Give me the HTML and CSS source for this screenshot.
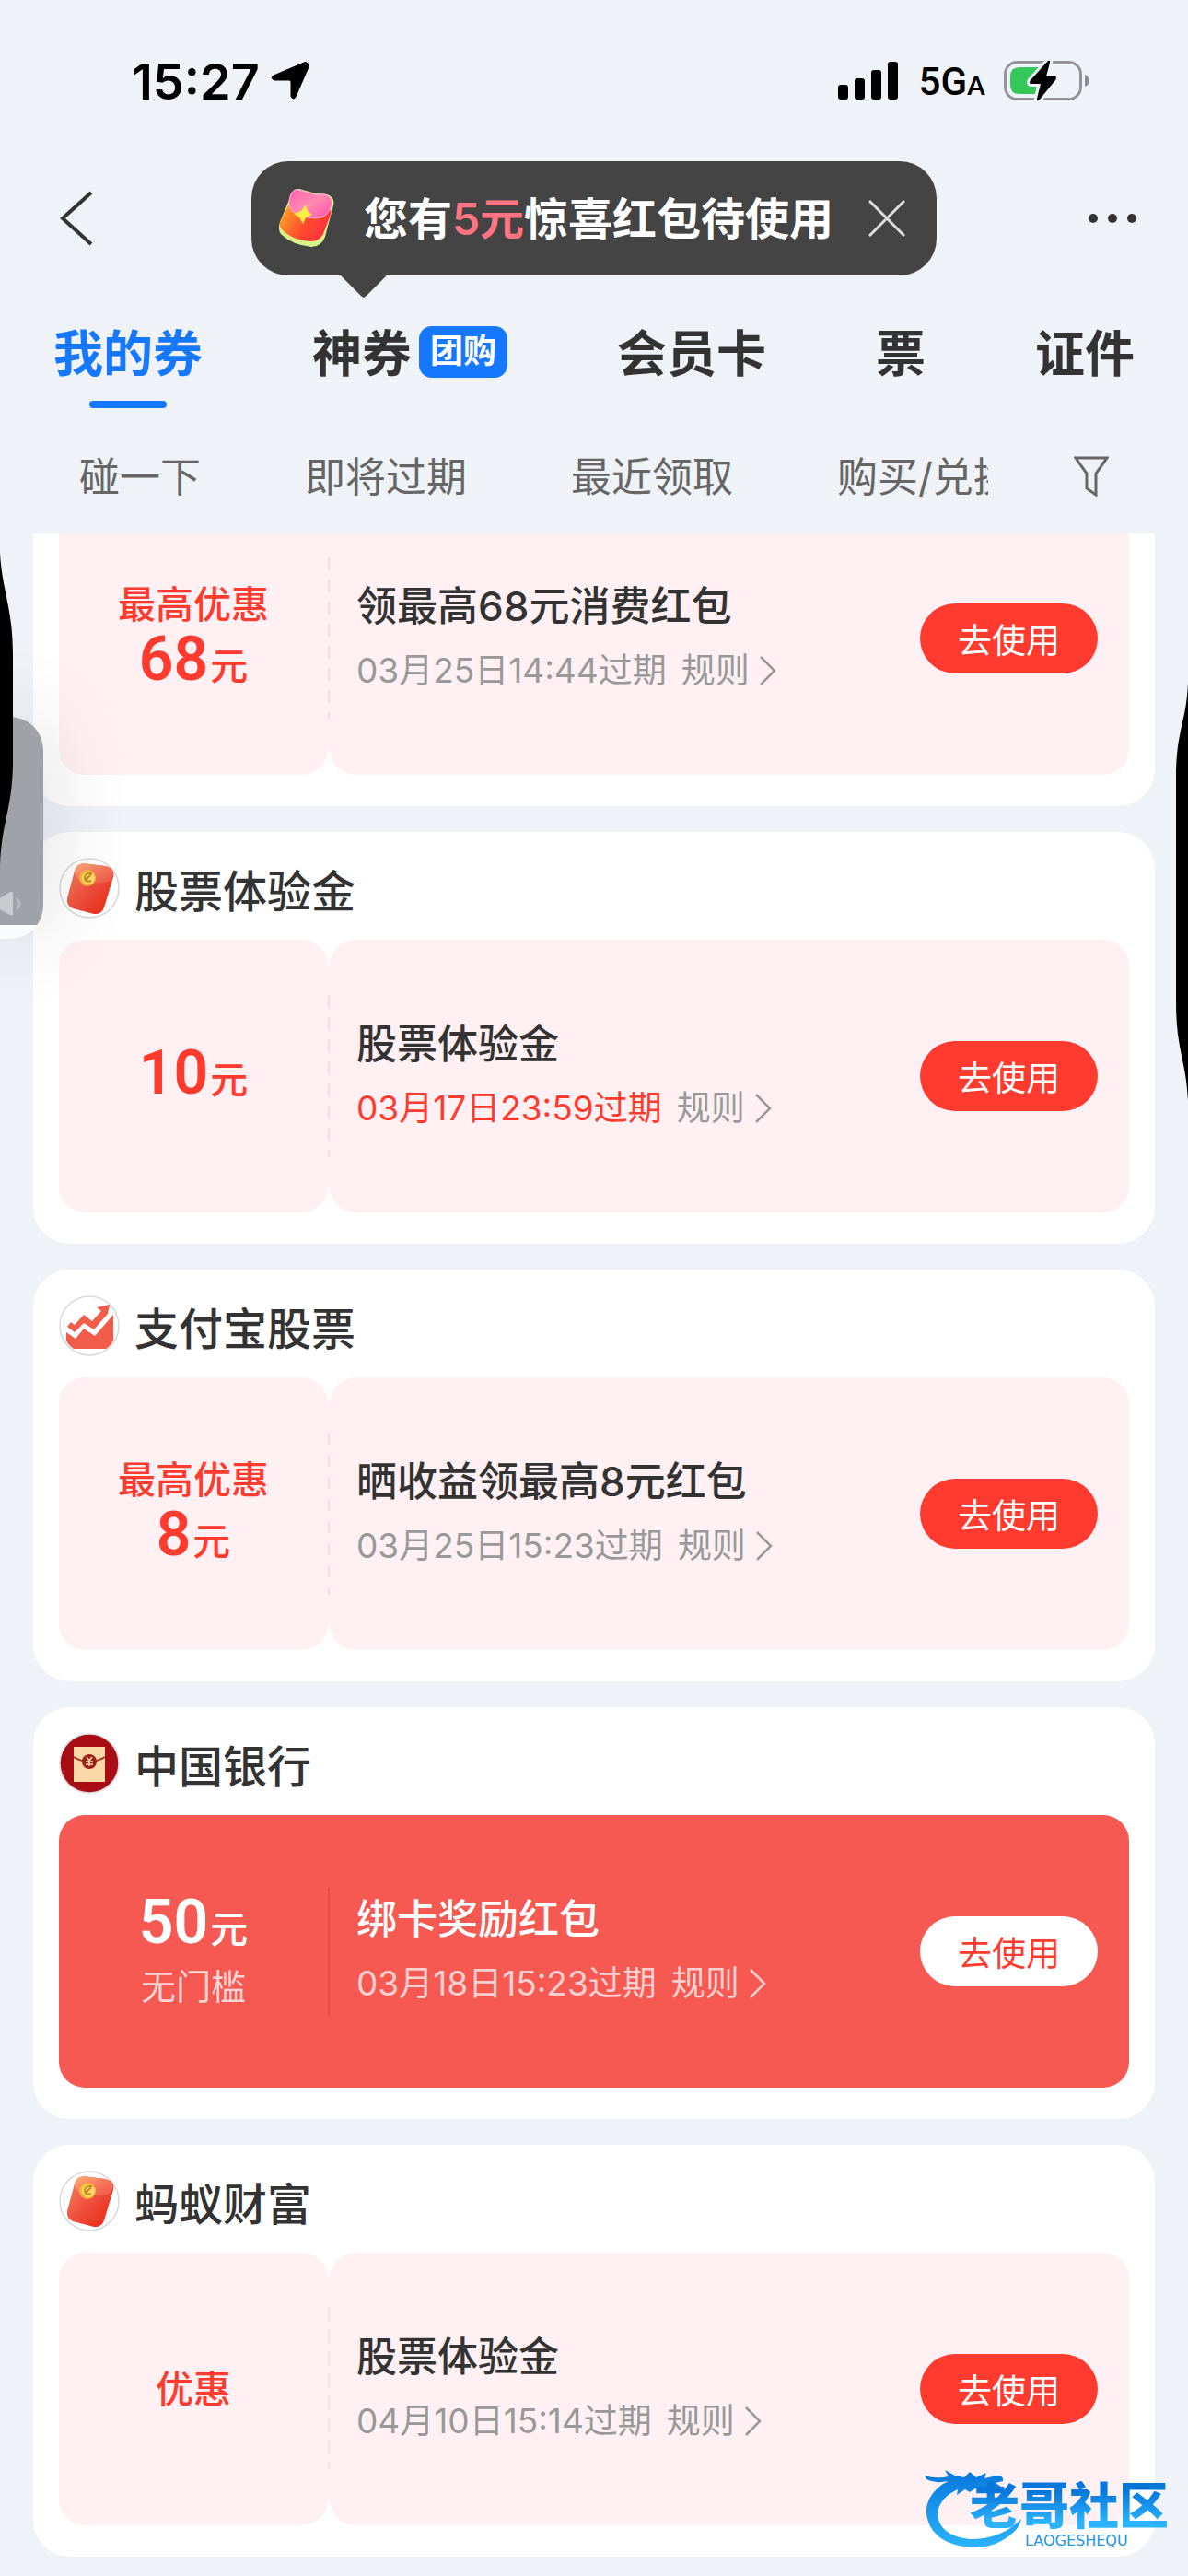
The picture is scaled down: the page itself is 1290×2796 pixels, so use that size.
FILE: index.html
```html
<!DOCTYPE html>
<html lang="zh-CN">

<head>
  <meta charset="UTF-8" />
  <meta name="viewport" content="width=device-width, initial-scale=1.0" />
  <title>我的券</title>
  <link rel="stylesheet" href="styles.css">
</head>

<body>
  <!-- icones compartilhados -->
  <svg class="defs" width="0" height="0" aria-hidden="true">
    <defs>
      <linearGradient id="red-body" x1="0" y1="0" x2="1" y2="1">
        <stop offset="0" stop-color="#f9805f" />
        <stop offset="0.5" stop-color="#ef4f3d" />
        <stop offset="1" stop-color="#e8230f" />
      </linearGradient>
      <linearGradient id="red-flap" x1="0" y1="0" x2="1" y2="1">
        <stop offset="0" stop-color="#fdb279" />
        <stop offset="0.5" stop-color="#f5795c" />
        <stop offset="1" stop-color="#ef5543" />
      </linearGradient>
      <linearGradient id="gift-body" x1="0" y1="0.2" x2="1" y2="0.6">
        <stop offset="0" stop-color="#ffa426" />
        <stop offset="0.55" stop-color="#ff4a2e" />
        <stop offset="1" stop-color="#ff2f3c" />
      </linearGradient>
      <linearGradient id="gift-flap" x1="0" y1="0" x2="1" y2="1">
        <stop offset="0" stop-color="#ff5fae" />
        <stop offset="0.5" stop-color="#ff8bb0" />
        <stop offset="1" stop-color="#ff4fb0" />
      </linearGradient>
      <linearGradient id="dragon" x1="0" y1="0" x2="0" y2="1">
        <stop offset="0" stop-color="#0877dc" />
        <stop offset="1" stop-color="#2ab4fb" />
      </linearGradient>
    </defs>
    <symbol id="icon-packet" viewBox="0 0 66 66">
      <circle cx="33" cy="33" r="32" fill="#fff" stroke="#dadada" stroke-width="1.5" />
      <path d="M17 14 Q19 7 26 6 L50 9 Q61 11 59 21 L49 54 Q46 62 38 61 L15 55 Q8 52 9 44Z" fill="url(#red-body)" />
      <path d="M17 14 Q19 7 26 6 L50 9 Q61 11 58 21 Q55 27 46 27 L29 26 Q17 24 17 14Z" fill="url(#red-flap)" />
      <circle cx="31" cy="22" r="9" fill="#f5b53a" />
      <circle cx="32" cy="22" r="7" fill="#ffd968" />
      <path d="M36 17 Q28 16 28 22 Q29 27 35 25 M35 18 L28 25" fill="none" stroke="#c98a1d" stroke-width="2" />
    </symbol>
    <symbol id="icon-chevron" viewBox="0 0 20 34">
      <path d="M2 2 L17 17 L2 32" fill="none" stroke="currentColor" stroke-width="2.5" />
    </symbol>
  </svg>

  <div class="screen">
    <div class="status">
      <span class="time">15:27</span>
      <svg class="location" width="42" height="42" viewBox="0 0 42 42">
        <path d="M39 1 Q42 2 41 6 L27 38 Q25 42 22 38 L22 22 Q22 20 20 20 L4 20 Q-1 18 3 15 L36 1 Q38 0 39 1Z" fill="#000" stroke="#000" stroke-width="1" />
      </svg>
      <svg class="signal" width="66" height="42" viewBox="0 0 66 42">
        <rect x="0" y="25" width="11" height="16" rx="3" />
        <rect x="18" y="18" width="11" height="23" rx="3" />
        <rect x="36" y="9" width="11" height="32" rx="3" />
        <rect x="54" y="0" width="11" height="41" rx="3" />
      </svg>
      <span class="network">5G<small>A</small></span>
      <svg width="94" height="46" viewBox="0 0 94 46">
        <rect x="1.5" y="2.5" width="82" height="40" rx="13" fill="none" stroke="#939398" stroke-width="3" />
        <path d="M88 16 Q93 18 93 23 Q93 27 88 29Z" fill="#8c8c91" />
        <path d="M17 8 H40 L34 37 H17 Q7 37 7 27 V18 Q7 8 17 8Z" fill="#34c759" />
        <path d="M48 1 Q51 0 50 3 L46 18 H56 Q58 19 56 22 L38 44 Q35 45 36 42 L40 26 H29 Q27 25 29 22Z" fill="#000" stroke="#eff3f7" stroke-width="6" paint-order="stroke" />
      </svg>
    </div>

    <header class="nav">
      <button class="back" aria-label="返回">
        <svg width="42" height="60" viewBox="0 0 42 60">
          <path d="M39 2 L8 30 L39 58" fill="none" stroke="#333" stroke-width="4" />
        </svg>
      </button>
      <div class="tip">
        <svg width="66" height="68" viewBox="0 0 66 68">
          <path d="M15 9 Q17 1 24 2 L42 7 L54 8 Q63 11 61 20 L52 54 Q48 65 37 65 Q17 63 5 52 Q0 47 3 38Z" fill="#d8f58a" />
          <path d="M12 20 L55 23 Q60 24 58 30 L50 51 Q45 60 35 59 Q15 57 5 46 Q1 42 4 36Z" fill="url(#gift-body)" />
          <path d="M14 10 Q17 1 24 3 L41 8 L52 8 Q61 11 59 20 Q55 34 41 34 Q25 33 16 26 Q11 21 14 10Z" fill="url(#gift-flap)" stroke="#ffb0d4" stroke-width="1" />
          <path d="M31 19 L33 26 L38 30 L31 33 L28 40 L24 33 L18 29 L26 26Z" fill="#ffec45" />
        </svg>
        <span class="tip-text">您有<em>5元</em>惊喜红包待使用</span>
        <button class="close" aria-label="关闭">
          <svg width="40" height="40" viewBox="0 0 40 40">
            <path d="M1 1 L39 39 M39 1 L1 39" stroke="#ddd" stroke-width="3" />
          </svg>
        </button>
      </div>
      <button class="more" aria-label="更多">
        <svg width="56" height="12" viewBox="0 0 56 12" fill="#333">
          <circle cx="5" cy="6" r="5" />
          <circle cx="26" cy="6" r="5" />
          <circle cx="47" cy="6" r="5" />
        </svg>
      </button>
    </header>

    <nav class="tabs">
      <a href="#" class="tab active">我的券</a>
      <a href="#" class="tab">神券<span class="badge">团购</span></a>
      <a href="#" class="tab">会员卡</a>
      <a href="#" class="tab">票</a>
      <a href="#" class="tab">证件</a>
    </nav>

    <div class="filters">
      <div class="filter-list">
        <a href="#">碰一下</a>
        <a href="#">即将过期</a>
        <a href="#">最近领取</a>
        <a href="#">购买/兑换</a>
      </div>
      <button aria-label="筛选">
        <svg width="38" height="44" viewBox="0 0 38 44">
          <path d="M2 2 H36 L24 19 V42 L14 35 V19Z" fill="none" stroke="#666" stroke-width="3" />
        </svg>
      </button>
    </div>

    <main class="list">
      <section class="card scrolled">
        <div class="coupon">
          <div class="value">
            <span class="label">最高优惠</span>
            <span class="amount"><b>68</b>元</span>
          </div>
          <div class="divider"></div>
          <div class="info">
            <div class="text">
              <h3>领最高68元消费红包</h3>
              <p><span>03月25日14:44过期</span><a href="#">规则<svg><use href="#icon-chevron" /></svg></a></p>
            </div>
            <button class="use">去使用</button>
          </div>
        </div>
      </section>

      <section class="card">
        <h2><svg><use href="#icon-packet" /></svg>股票体验金</h2>
        <div class="coupon">
          <div class="value">
            <span class="amount"><b>10</b>元</span>
          </div>
          <div class="divider"></div>
          <div class="info">
            <div class="text">
              <h3>股票体验金</h3>
              <p><span class="soon">03月17日23:59过期</span><a href="#">规则<svg><use href="#icon-chevron" /></svg></a></p>
            </div>
            <button class="use">去使用</button>
          </div>
        </div>
      </section>

      <section class="card">
        <h2>
          <svg viewBox="0 0 66 66">
            <circle cx="33" cy="33" r="32" fill="#fff" stroke="#dadada" stroke-width="1.5" />
            <path d="M8 40 L18 47 L27 36 L39 44 L59 21 V49 Q56 55 51 58 H16 Q11 55 8 49Z" fill="#f25c4b" />
            <path d="M9 34 L13 29 L17 32 L27 21 L36 28 L46 17 L41 13 L55 10 L53 20 L38 37 L27 30 L17 40Z" fill="#f25c4b" />
          </svg>支付宝股票
        </h2>
        <div class="coupon">
          <div class="value">
            <span class="label">最高优惠</span>
            <span class="amount"><b>8</b>元</span>
          </div>
          <div class="divider"></div>
          <div class="info">
            <div class="text">
              <h3>晒收益领最高8元红包</h3>
              <p><span>03月25日15:23过期</span><a href="#">规则<svg><use href="#icon-chevron" /></svg></a></p>
            </div>
            <button class="use">去使用</button>
          </div>
        </div>
      </section>

      <section class="card">
        <h2>
          <svg viewBox="0 0 66 66">
            <circle cx="33" cy="33" r="32" fill="#a80c14" stroke="#dadada" stroke-width="1.5" />
            <rect x="16" y="15" width="34" height="38" fill="#fbd9a6" />
            <path d="M16 26 Q24 31 33 31 Q42 31 50 26" fill="none" stroke="#a3271d" stroke-width="2" />
            <circle cx="33" cy="31" r="8" fill="#9c1f17" />
            <path d="M30 26 L33 30 L36 26 M33 30 V36 M29 31 H37 M29 34 H37" fill="none" stroke="#fbd9a6" stroke-width="1.5" />
          </svg>中国银行
        </h2>
        <div class="coupon solid">
          <div class="value">
            <span class="amount"><b>50</b>元</span>
            <span class="limit">无门槛</span>
          </div>
          <div class="divider"></div>
          <div class="info">
            <div class="text">
              <h3>绑卡奖励红包</h3>
              <p><span>03月18日15:23过期</span><a href="#">规则<svg><use href="#icon-chevron" /></svg></a></p>
            </div>
            <button class="use">去使用</button>
          </div>
        </div>
      </section>

      <section class="card">
        <h2><svg><use href="#icon-packet" /></svg>蚂蚁财富</h2>
        <div class="coupon">
          <div class="value">
            <span class="label">优惠</span>
          </div>
          <div class="divider"></div>
          <div class="info">
            <div class="text">
              <h3>股票体验金</h3>
              <p><span>04月10日15:14过期</span><a href="#">规则<svg><use href="#icon-chevron" /></svg></a></p>
            </div>
            <button class="use">去使用</button>
          </div>
        </div>
      </section>
    </main>

    <!-- janela flutuante de video na borda esquerda -->
    <div class="pip">
      <svg width="24" height="28" viewBox="0 0 24 28">
        <path d="M0 8 L11 1 Q14 0 14 3 V25 Q14 28 11 26 L0 20Z" fill="#c9cbce" />
        <path d="M18 8 Q24 14 18 20" fill="none" stroke="#b5b8bb" stroke-width="3" />
      </svg>
    </div>
    <svg class="edge-left" width="14" height="340" viewBox="0 0 14 340">
      <path d="M0 0 C2 40 14 60 14 110 V230 C13 280 2 290 0 340Z" />
    </svg>
    <svg class="edge-right" width="13" height="454" viewBox="0 0 13 454">
      <path d="M13 0 C11 45 0 50 0 105 V345 C0 400 11 409 13 454Z" />
    </svg>

    <div class="watermark">
      <svg width="108" height="94" viewBox="0 0 108 94">
        <path d="M1 14 Q14 18 27 15 L23 8 L34 14 L44 16 L50 10 L57 16 L68 11 L66 17 L80 14 Q87 14 86 20 L78 22 L84 26 L83 32 L74 29 L64 31 L56 28 L50 32 L45 29 L36 35 L37 29 Q17 38 15 55 Q16 79 50 83 Q85 83 106 61 Q104 70 98 75 Q80 92 56 92 Q8 90 3 56 Q1 37 21 23 L27 20 Q12 23 3 18Z" fill="url(#dragon)" />
      </svg>
      <span class="brand">老哥社区</span>
      <small>LAOGESHEQU</small>
    </div>
  </div>
</body>

</html>
```

FILE: styles.css
```css
* {
  box-sizing: border-box;
}

body {
  margin: 0;
  background-color: #eff3f7;
  color: #333;
  font-family: Inter, "Noto Sans CJK SC", sans-serif;
}

h2,
h3,
p {
  margin: 0;
}

a {
  color: inherit;
  text-decoration: none;
}

button {
  padding: 0;
  border: none;
  background: none;
  color: inherit;
  font-family: inherit;
  cursor: pointer;
}

svg {
  display: block;
  flex-shrink: 0;
}

.defs {
  position: absolute;
}

.screen {
  position: relative;
  overflow: hidden;
  padding-bottom: 22px;
}

/* barra de status */
.status {
  display: flex;
  align-items: center;
  height: 118px;
  padding: 58px 106px 0 143px;
  color: #000;
}

.time {
  font-size: 54px;
  font-weight: 600;
}

.location {
  margin-left: 12px;
}

.signal {
  margin-left: auto;
}

.network {
  margin: 0 20px 0 22px;
  font-family: Roboto, sans-serif;
  font-size: 42px;
  font-weight: 500;
}

.network small {
  font-size: 30px;
}

/* topo */
.nav {
  display: grid;
  grid-template-columns: 1fr auto 1fr;
  align-items: center;
  padding: 57px 52px 0 60px;
}

.back {
  justify-self: start;
}

.more {
  justify-self: end;
}

.tip {
  position: relative;
  display: flex;
  align-items: center;
  height: 124px;
  margin-right: 8px;
  padding: 0 34px 0 28px;
  border-radius: 40px;
  background-color: #444;
  color: #fff;
}

.tip::after {
  content: "";
  position: absolute;
  left: 97px;
  top: 100%;
  width: 50px;
  height: 24px;
  background-color: #444;
  clip-path: polygon(0 0, 100% 0, 56% 92%, 50% 100%, 44% 92%);
}

.tip-text {
  margin: 0 38px 0 28px;
  padding-bottom: 6px;
  font-size: 48px;
  font-weight: 600;
}

.tip em {
  color: #ff7482;
  font-style: normal;
}

/* abas */
.tabs {
  display: flex;
  justify-content: space-between;
  margin-top: 44px;
  padding: 0 58px;
}

.tab {
  position: relative;
  display: flex;
  align-items: center;
  height: 100px;
  padding-bottom: 26px;
  font-size: 54px;
  font-weight: 600;
}

.active {
  color: #1677ff;
}

.active::after {
  content: "";
  position: absolute;
  left: 50%;
  bottom: 0;
  width: 84px;
  height: 8px;
  margin-left: -42px;
  border-radius: 4px;
  background-color: #1677ff;
}

.badge {
  height: 56px;
  margin: 4px 0 0 8px;
  padding: 0 12px;
  border-radius: 14px;
  background-color: #1677ff;
  color: #fff;
  font-size: 36px;
  line-height: 54px;
}

.filters {
  display: flex;
  justify-content: space-between;
  align-items: center;
  height: 136px;
  padding: 44px 86px 32px;
  color: #666;
  font-size: 44px;
}

.filter-list {
  display: flex;
  flex: 1;
  gap: 113px;
  overflow: hidden;
  margin-right: 93px;
  padding-bottom: 4px;
  white-space: nowrap;
}

/* cupons */
.list {
  display: flex;
  flex-direction: column;
  gap: 28px;
  padding: 0 36px;
}

.card {
  padding: 28px 28px 34px;
  border-radius: 40px;
  background-color: #fff;
}

.card h2 {
  display: flex;
  align-items: center;
  gap: 16px;
  height: 66px;
  margin-bottom: 23px;
  font-size: 48px;
  font-weight: 500;
}

.card h2 svg {
  width: 66px;
  height: 66px;
}

.scrolled {
  overflow: hidden;
  padding-top: 0;
  border-radius: 0 0 40px 40px;
}

.scrolled .coupon {
  margin-top: -34px;
}

.coupon {
  display: grid;
  grid-template-columns: 292px 2px 1fr;
  height: 296px;
}

.value,
.info {
  display: flex;
  border-radius: 28px;
  background-color: #fff1f3;
}

.value {
  flex-direction: column;
  justify-content: center;
  align-items: center;
  color: #ff3b30;
  font-size: 41px;
  font-weight: 500;
}

.label {
  line-height: 52px;
}

.amount {
  line-height: 68px;
}

.amount b {
  margin-right: 2px;
  font-family: Roboto, sans-serif;
  font-size: 66px;
  font-weight: 600;
}

.limit {
  font-size: 38px;
  font-weight: 400;
  line-height: 56px;
  opacity: 0.75;
}

.divider {
  margin: 28px 0;
  padding: 32px 0;
  background: repeating-linear-gradient(#ffd9de 0 14px, #fff1f3 14px 24px) content-box, #fff1f3;
}

.info {
  justify-content: space-between;
  align-items: center;
  padding: 0 34px 0 29px;
}

.text h3 {
  margin-bottom: 10px;
  font-size: 44px;
  font-weight: 500;
  line-height: 60px;
}

.text p {
  display: flex;
  gap: 16px;
  color: #999;
  font-size: 37px;
  line-height: 60px;
}

.text a {
  display: flex;
  align-items: center;
  gap: 10px;
}

.text svg {
  width: 20px;
  height: 34px;
}

.soon {
  color: #ff3b30;
}

.use {
  width: 193px;
  height: 76px;
  border-radius: 38px;
  background-color: #ff3b30;
  color: #fff;
  font-size: 37px;
}

.solid {
  border-radius: 28px;
  background-color: #f65952;
}

.solid .value,
.solid .info {
  background: none;
  color: #fff;
}

.solid .divider {
  margin: 79px 0;
  padding: 0;
  background: #e84b46;
}

.solid p {
  color: #fcd0ce;
}

.solid .use {
  background-color: #fff;
  color: #ff3b30;
}

/* elementos sobre a pagina */
.pip {
  position: absolute;
  left: 0;
  top: 778px;
  width: 47px;
  height: 241px;
  padding-top: 189px;
  border-radius: 0 36px 36px 0;
  background: linear-gradient(#9fa2a6 226px, #fafbfd 226px);
  box-shadow: 0 0 90px rgba(40, 40, 60, 0.2);
}

.edge-left {
  position: absolute;
  left: 0;
  top: 600px;
}

.edge-right {
  position: absolute;
  right: 0;
  top: 741px;
}

.watermark {
  position: absolute;
  right: 21px;
  bottom: 30px;
  display: grid;
  grid-template-columns: 50px auto;
  grid-template-rows: 76px 18px;
  color: #2196e8;
}

.watermark svg {
  grid-row: 1 / 3;
}

.brand {
  align-self: end;
  background: linear-gradient(#0877dc 20%, #2ab4fb 80%);
  background-clip: text;
  color: transparent;
  font-size: 54px;
  font-weight: 900;
  line-height: 56px;
}

.watermark small {
  margin-left: 60px;
  font-family: "DejaVu Sans", sans-serif;
  font-size: 16px;
  line-height: 18px;
}
```
